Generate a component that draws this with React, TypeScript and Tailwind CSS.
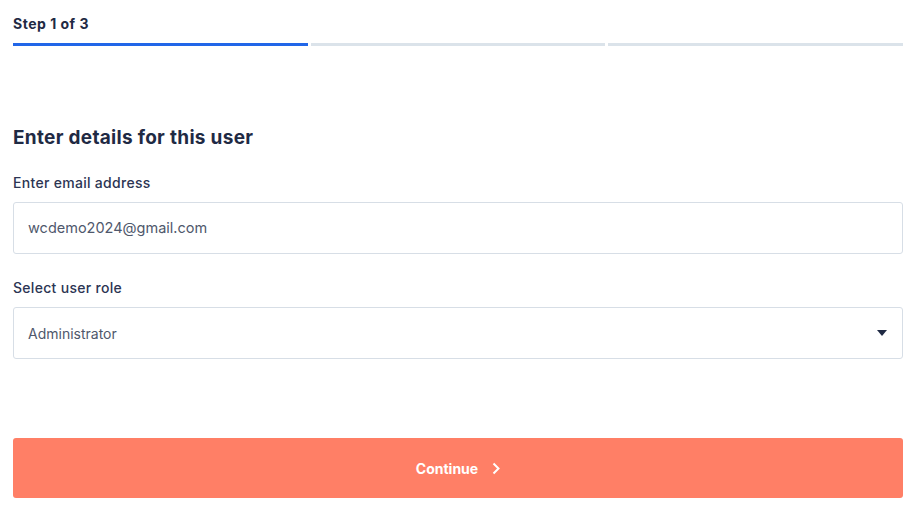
export default function App() {
  const steps = [true, false, false];

  return (
    <div className="min-h-screen bg-white px-[13px] pt-[14px] text-[#1f2a44]" style={{ fontFamily: "Inter, 'Noto Sans', sans-serif" }}>
      <div className="w-[890px]">
        <div className="text-[14px] font-bold leading-[20px] tracking-[0.5px]">Step 1 of 3</div>
        <div className="mt-[9px] flex gap-[3px]">
          {steps.map((active, i) => (
            <div key={i} className={`h-[3px] flex-1 ${active ? "bg-[#2166e8]" : "bg-[#dbe3ea]"}`} />
          ))}
        </div>

        <div className="mt-[80px] text-[19px] font-bold leading-[24px] tracking-[0.3px]">Enter details for this user</div>

        <div className="mt-[23px] text-[14px] font-medium leading-[20px] tracking-[0.3px] text-[#2c3553]">Enter email address</div>
        <div className="mt-[9px] flex h-[52px] items-center rounded-[3px] border border-[#d7dee6] px-[14px] text-[14.5px] text-[#4f586c]">
          wcdemo2024@gmail.com
        </div>

        <div className="mt-[24px] text-[14px] font-medium leading-[20px] tracking-[0.3px] text-[#2c3553]">Select user role</div>
        <div className="mt-[9px] flex h-[52px] items-center justify-between rounded-[3px] border border-[#d7dee6] pl-[14px] pr-[15px] text-[14px] text-[#4f586c]">
          <span>Administrator</span>
          <svg width="10" height="6" viewBox="0 0 10 6">
            <path d="M0 0h10L5 6z" fill="#1f2a44" />
          </svg>
        </div>

        <button className="mt-[79px] flex h-[60px] w-full items-center justify-center gap-[14px] rounded-[3px] bg-[#ff7f66] text-[14px] font-bold text-white">
          <span>Continue</span>
          <svg width="8" height="13" viewBox="0 0 8 13">
            <path d="M1.5 1.5l5 5-5 5" stroke="white" strokeWidth="2" fill="none" />
          </svg>
        </button>
      </div>
    </div>
  );
}
